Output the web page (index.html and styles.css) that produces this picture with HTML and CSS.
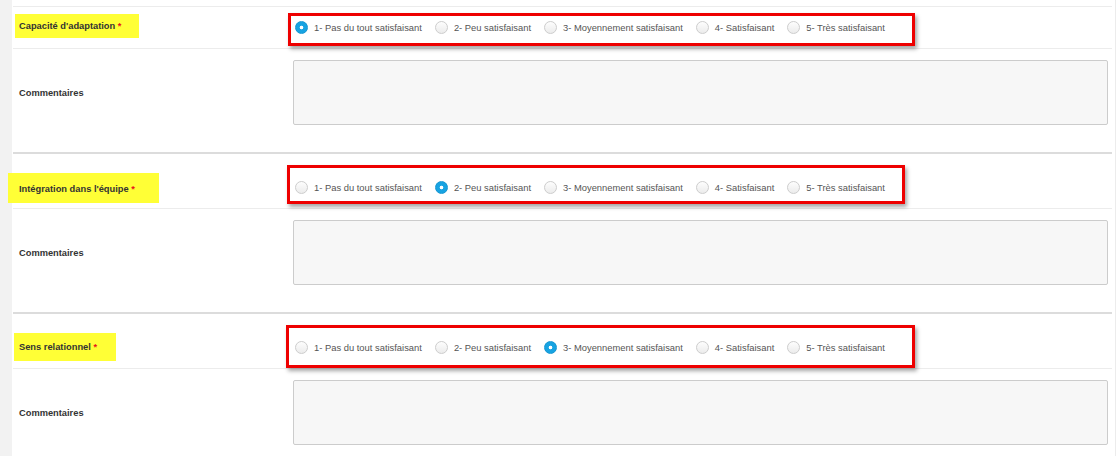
FILE: index.html
```html
<!DOCTYPE html>
<html lang="fr">
<head>
    <meta charset="UTF-8">
    <meta name="viewport" content="width=device-width, initial-scale=1.0">
    <title>Évaluation</title>
    <link rel="stylesheet" href="styles.css">
</head>
<body>
    <div class="page">
        <div class="strip"></div>
        <div class="panel">
            <!-- Capacité d'adaptation -->
            <div class="section first">
                <div class="field rate">
                    <div class="label"><span class="hl hl-1">Capacité d'adaptation <em>*</em></span></div>
                    <div class="control">
                        <div class="mark mark-1">
                            <label class="opt"><input type="radio" name="q1" checked><span>1- Pas du tout satisfaisant</span></label>
                            <label class="opt"><input type="radio" name="q1"><span>2- Peu satisfaisant</span></label>
                            <label class="opt"><input type="radio" name="q1"><span>3- Moyennement satisfaisant</span></label>
                            <label class="opt"><input type="radio" name="q1"><span>4- Satisfaisant</span></label>
                            <label class="opt"><input type="radio" name="q1"><span>5- Très satisfaisant</span></label>
                        </div>
                    </div>
                </div>
                <div class="field comment">
                    <div class="label">Commentaires</div>
                    <div class="control"><textarea></textarea></div>
                </div>
            </div>
            <!-- Intégration dans l'équipe -->
            <div class="section">
                <div class="field rate">
                    <div class="label"><span class="hl hl-2">Intégration dans l'équipe <em>*</em></span></div>
                    <div class="control">
                        <div class="mark mark-2">
                            <label class="opt"><input type="radio" name="q2"><span>1- Pas du tout satisfaisant</span></label>
                            <label class="opt"><input type="radio" name="q2" checked><span>2- Peu satisfaisant</span></label>
                            <label class="opt"><input type="radio" name="q2"><span>3- Moyennement satisfaisant</span></label>
                            <label class="opt"><input type="radio" name="q2"><span>4- Satisfaisant</span></label>
                            <label class="opt"><input type="radio" name="q2"><span>5- Très satisfaisant</span></label>
                        </div>
                    </div>
                </div>
                <div class="field comment">
                    <div class="label">Commentaires</div>
                    <div class="control"><textarea></textarea></div>
                </div>
            </div>
            <!-- Sens relationnel -->
            <div class="section">
                <div class="field rate">
                    <div class="label"><span class="hl hl-3">Sens relationnel <em>*</em></span></div>
                    <div class="control">
                        <div class="mark mark-3">
                            <label class="opt"><input type="radio" name="q3"><span>1- Pas du tout satisfaisant</span></label>
                            <label class="opt"><input type="radio" name="q3"><span>2- Peu satisfaisant</span></label>
                            <label class="opt"><input type="radio" name="q3" checked><span>3- Moyennement satisfaisant</span></label>
                            <label class="opt"><input type="radio" name="q3"><span>4- Satisfaisant</span></label>
                            <label class="opt"><input type="radio" name="q3"><span>5- Très satisfaisant</span></label>
                        </div>
                    </div>
                </div>
                <div class="field comment">
                    <div class="label">Commentaires</div>
                    <div class="control"><textarea></textarea></div>
                </div>
            </div>
        </div>
    </div>
</body>
</html>
```

FILE: styles.css
```css
body {
    margin: 0;
    font-family: "Liberation Sans", Arial, sans-serif;
    background-color: #fff;
    color: #333;
}
.page {
    display: flex;
    height: 456px;
    overflow: hidden;
}
.strip {
    width: 12px;
    flex: none;
    background-color: #f2f2f2;
}
.panel {
    flex: 1;
    padding: 6px 3px 0 1px;
    border-right: 1px solid #ececec;
    margin-right: 4px;
}
.section {
    border-top: 2px solid #dcdcdc;
    padding-top: 13px;
}
.section.first {
    border-top: 1px solid #ececec;
    padding-top: 0;
}
.field {
    display: flex;
    align-items: center;
}
.label {
    width: 274px;
    flex: none;
    padding-left: 6px;
    font-size: 9.3px;
    font-weight: bold;
    color: #333;
}
.control {
    flex: 1;
    display: flex;
    align-items: center;
    padding-right: 4px;
}
.rate {
    height: 41px;
    border-bottom: 1px solid #ececec;
}
.comment {
    padding: 11px 0 27px;
}

/* surlignage jaune des libellés */
.hl {
    display: inline-block;
    background-color: #ffff36;
    line-height: 12px;
}
.hl em {
    font-style: normal;
    color: #e8141a;
}
.hl-1 {
    padding: 6px 18px 6px 4px;
    margin-left: -4px;
    margin-top: -3px;
}
.hl-2 {
    padding: 10px 24px 8px 11px;
    margin-left: -11px;
}
.hl-3 {
    padding: 8px 19px 8px 5px;
    margin-left: -5px;
    margin-top: -1px;
}

/* cadre rouge autour des choix */
.mark {
    display: flex;
    align-items: center;
    border: 3px solid #ee0000;
    box-shadow: 2px 3px 4px rgba(0, 0, 0, 0.35);
}
.mark-1 {
    padding: 5px 27px 8px 3px;
    margin: -8px 0 -11px -5px;
}
.mark-2 {
    padding: 13px 17px 6px 4px;
    margin: -16px 0 -9px -6px;
}
.mark-3 {
    padding: 13px 27px 10px 5px;
    margin: -16px 0 -13px -7px;
}
.opt {
    display: flex;
    align-items: center;
    height: 14px;
    margin-right: 12px;
    font-size: 9.4px;
    color: #555;
}
.opt:last-child {
    margin-right: 0;
}
.opt input {
    appearance: none;
    -webkit-appearance: none;
    width: 13px;
    height: 13px;
    margin: 0 6px 0 1px;
    border: 1px solid #cdcdcd;
    border-radius: 50%;
    background: linear-gradient(#fdfdfd, #ececec);
}
.opt input:checked {
    border-color: #1496d2;
    background: radial-gradient(circle, #fff 0 1.4px, #17a3e2 2.2px);
}

textarea {
    display: block;
    box-sizing: border-box;
    width: 100%;
    height: 65px;
    margin: 0;
    border: 1px solid #cccccc;
    border-radius: 2px;
    background-color: #f7f7f7;
    resize: none;
}
```
